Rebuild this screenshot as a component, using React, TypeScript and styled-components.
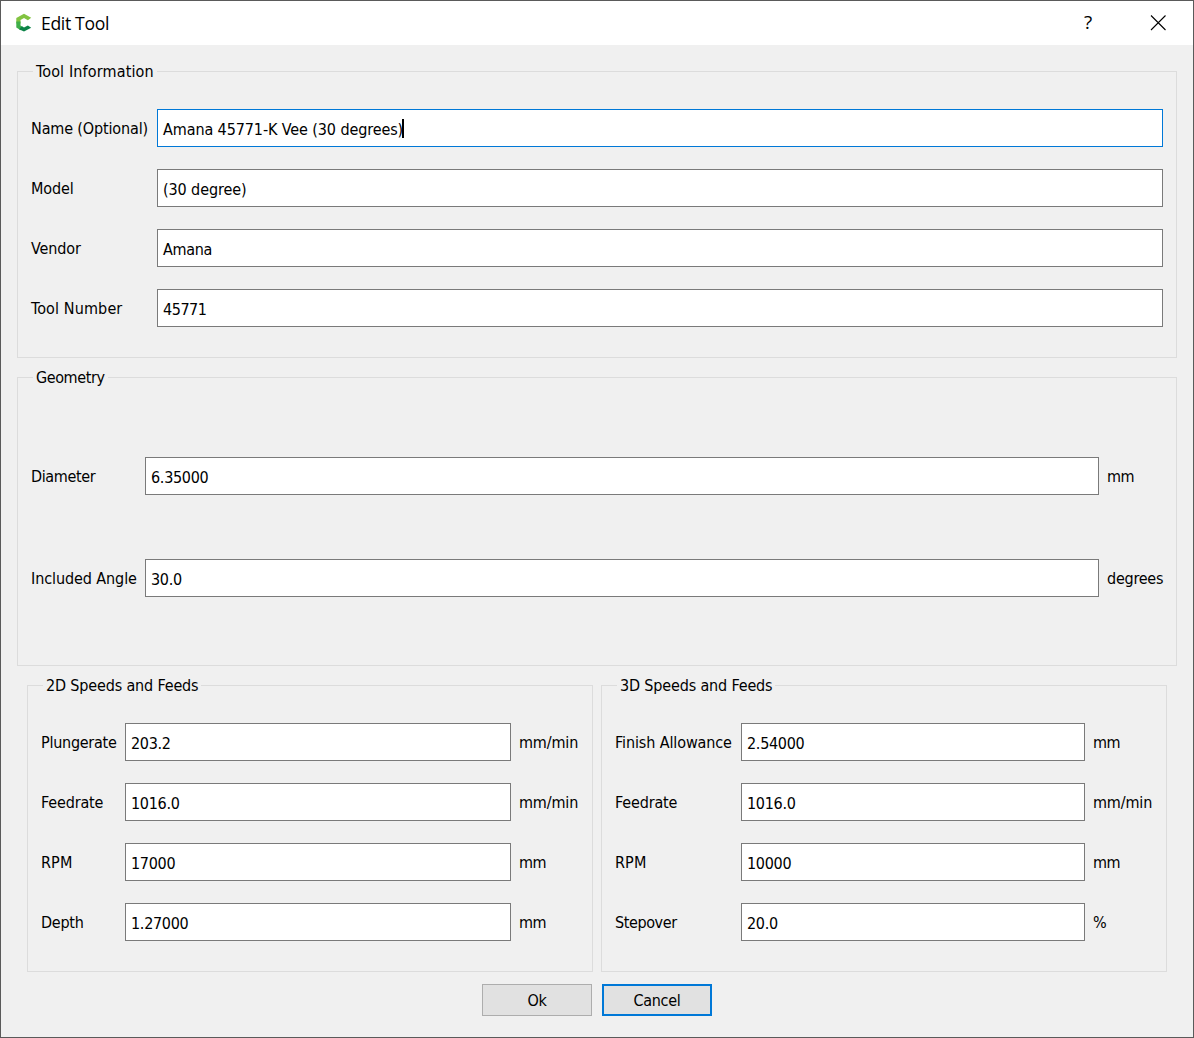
import React from "react";
import styled, { createGlobalStyle, css } from "styled-components";

const GlobalStyle = createGlobalStyle`
  *, *::before, *::after { box-sizing: border-box; }
  body {
    margin: 0;
    background: #f0f0f0;
    color: #000;
    font-family: "DejaVu Sans Condensed", "Noto Sans", sans-serif;
    font-size: 16px;
    line-height: 19px;
  }
`;

const Window = styled.div`
  display: flex;
  flex-direction: column;
  width: 1194px;
  height: 1038px;
  border: 1px solid #5a5a5a;
  background: #f0f0f0;
`;

const TitleBar = styled.header`
  display: flex;
  align-items: center;
  height: 44px;
  padding-left: 14px;
  background: #fff;
`;

const Title = styled.h1`
  flex: 1;
  margin: 0 0 1px 8px;
  font: 400 17.6px/24px "Open Sans", "Noto Sans", sans-serif;
  letter-spacing: -0.35px;
`;

const TitleButton = styled.button`
  display: flex;
  align-items: center;
  justify-content: center;
  width: 70px;
  height: 44px;
  padding: 0;
  border: 0;
  background: transparent;
  color: #000;
`;

const HelpMark = styled.span`
  margin-bottom: 2px;
  font: 400 19px/24px "Open Sans", "Noto Sans", sans-serif;
`;

const Body = styled.main`
  display: flex;
  flex-direction: column;
  gap: 9px;
  padding: 16px 16px 0;
`;

const Group = styled.fieldset<{ $height: number; $top?: number }>`
  min-width: 0;
  height: ${(p) => p.$height}px;
  margin: 0;
  padding: ${(p) => p.$top ?? 27}px 13px 0;
  border: 1px solid #dcdcdc;
`;

const Legend = styled.legend<{ $tracking?: number }>`
  height: 21px;
  margin-left: 2px;
  padding: 0 3px;
  line-height: 21px;
  letter-spacing: ${(p) => p.$tracking ?? 0}px;
`;

const Rows = styled.div<{ $gap?: number }>`
  display: flex;
  flex-direction: column;
  gap: ${(p) => p.$gap ?? 22}px;
`;

const Row = styled.div<{ $label: number; $unit: number }>`
  display: grid;
  grid-template-columns: ${(p) => p.$label}px 1fr ${(p) => p.$unit}px;
  align-items: center;
  height: 38px;
`;

const Label = styled.label<{ $tracking?: number }>`
  padding-top: 1px;
  white-space: nowrap;
  letter-spacing: ${(p) => p.$tracking ?? 0}px;
`;

const Unit = styled(Label)`
  padding-left: 8px;
`;

const Field = styled.div<{ $focused?: boolean; $tracking: number }>`
  display: flex;
  align-items: center;
  height: 38px;
  padding: 3px 5px 0;
  border: 1px solid #7a7a7a;
  background: #fff;
  white-space: nowrap;
  letter-spacing: ${(p) => p.$tracking}px;
  ${(p) => p.$focused && css`border-color: #0078d7;`}
`;

const Caret = styled.span`
  width: 2px;
  height: 19px;
  margin: 0 0 2px -1px;
  background: #000;
`;

const Feeds = styled.div`
  display: grid;
  grid-template-columns: 1fr 1fr;
  gap: 8px;
  padding: 0 10px;
`;

const Actions = styled.footer`
  display: flex;
  justify-content: center;
  gap: 10px;
  padding-top: 3px;
`;

const Button = styled.button<{ $primary?: boolean }>`
  width: 110px;
  height: 32px;
  padding: 1px 0 0;
  border: ${(p) => (p.$primary ? "2px solid #0078d7" : "1px solid #adadad")};
  background: #e1e1e1;
  color: #000;
  font: inherit;
  letter-spacing: -0.3px;
`;

type RowData = {
  label: string;
  value: string;
  unit?: string;
  labelTracking?: number;
  valueTracking?: number;
  unitTracking?: number;
  focused?: boolean;
};

const info: RowData[] = [
  { label: "Name (Optional)", value: "Amana 45771-K Vee (30 degrees)", valueTracking: -0.1, labelTracking: -0.14, focused: true },
  { label: "Model", value: "(30 degree)", labelTracking: -0.1, valueTracking: -0.1 },
  { label: "Vendor", value: "Amana", labelTracking: -0.11, valueTracking: -0.35 },
  { label: "Tool Number", value: "45771", labelTracking: 0.12, valueTracking: -0.45 },
];

const geometry: RowData[] = [
  { label: "Diameter", value: "6.35000", unit: "mm", labelTracking: -0.38, unitTracking: -0.6 },
  { label: "Included Angle", value: "30.0", unit: "degrees", labelTracking: -0.09, unitTracking: -0.24 },
];

const feeds2d: RowData[] = [
  { label: "Plungerate", value: "203.2", unit: "mm/min", labelTracking: -0.26, unitTracking: -0.15 },
  { label: "Feedrate", value: "1016.0", unit: "mm/min", labelTracking: -0.15, unitTracking: -0.15 },
  { label: "RPM", value: "17000", unit: "mm", labelTracking: 0.1, unitTracking: -0.6 },
  { label: "Depth", value: "1.27000", unit: "mm", labelTracking: -0.25, unitTracking: -0.6 },
];

const feeds3d: RowData[] = [
  { label: "Finish Allowance", value: "2.54000", unit: "mm", labelTracking: -0.11, unitTracking: -0.6 },
  { label: "Feedrate", value: "1016.0", unit: "mm/min", labelTracking: -0.15, unitTracking: -0.15 },
  { label: "RPM", value: "10000", unit: "mm", labelTracking: 0.1, unitTracking: -0.6 },
  { label: "Stepover", value: "20.0", unit: "%", labelTracking: -0.4 },
];

function FormRows({ rows, label, unit = 0, gap }: { rows: RowData[]; label: number; unit?: number; gap?: number }) {
  return (
    <Rows $gap={gap}>
      {rows.map((r) => (
        <Row key={r.label} $label={label} $unit={unit}>
          <Label $tracking={r.labelTracking}>{r.label}</Label>
          <Field $focused={r.focused} $tracking={r.valueTracking ?? -0.3}>
            {r.value}
            {r.focused && <Caret />}
          </Field>
          {r.unit && <Unit $tracking={r.unitTracking}>{r.unit}</Unit>}
        </Row>
      ))}
    </Rows>
  );
}

function Logo() {
  return (
    <svg width="18" height="20" viewBox="0 0 18 20">
      <path d="M1.3 5 9 .7l7.2 4-3.3 2.6L9 5.1 5.5 7.1v3.4H1.3z" fill="#82c341" />
      <path d="M1.3 8.6h4.2v4l2.2 1.5-2 3.2-4.4-2.7z" fill="#3fae49" />
      <path d="M4 16.2 7 13.3l2 1.3 3.9-2.2 3.3 2.3L9 18.6z" fill="#0b8347" />
    </svg>
  );
}

export default function App() {
  return (
    <>
      <GlobalStyle />
      <Window>
        <TitleBar>
          <Logo />
          <Title>Edit Tool</Title>
          <TitleButton aria-label="Help"><HelpMark>?</HelpMark></TitleButton>
          <TitleButton aria-label="Close">
            <svg width="16" height="16" viewBox="0 0 16 16">
              <path d="M1 .5l14.5 14.5M15.5.5L1 15" stroke="#000" strokeWidth="1.1" />
            </svg>
          </TitleButton>
        </TitleBar>
        <Body>
          <Group $height={297}>
            <Legend $tracking={0.14}>Tool Information</Legend>
            <FormRows rows={info} label={126} />
          </Group>
          <Group $height={299} $top={69}>
            <Legend $tracking={-0.4}>Geometry</Legend>
            <FormRows rows={geometry} label={114} unit={64} gap={64} />
          </Group>
          <Feeds>
            <Group $height={297}>
              <Legend $tracking={-0.16}>2D Speeds and Feeds</Legend>
              <FormRows rows={feeds2d} label={84} unit={68} />
            </Group>
            <Group $height={297}>
              <Legend $tracking={-0.16}>3D Speeds and Feeds</Legend>
              <FormRows rows={feeds3d} label={126} unit={68} />
            </Group>
          </Feeds>
          <Actions>
            <Button>Ok</Button>
            <Button $primary>Cancel</Button>
          </Actions>
        </Body>
      </Window>
    </>
  );
}
